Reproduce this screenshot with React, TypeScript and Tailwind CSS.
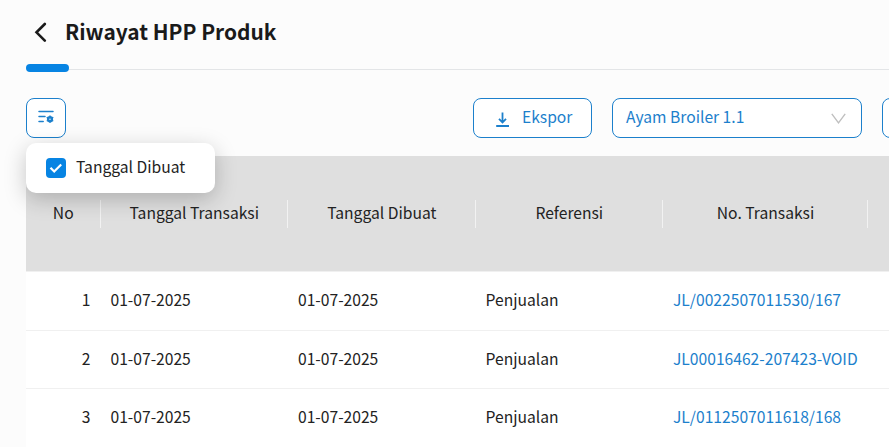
import { useState } from "react";

const COLUMNS = [
  { label: "No", cell: "w-[74.5px]" },
  { label: "Tanggal Transaksi", cell: "w-[187.5px]" },
  { label: "Tanggal Dibuat", cell: "w-[187.5px]" },
  { label: "Referensi", cell: "w-[187.5px]" },
  { label: "No. Transaksi", cell: "w-[205px]" },
];

const ROWS = [
  { date: "01-07-2025", created: "01-07-2025", ref: "Penjualan", trx: "JL/0022507011530/167" },
  { date: "01-07-2025", created: "01-07-2025", ref: "Penjualan", trx: "JL00016462-207423-VOID" },
  { date: "01-07-2025", created: "01-07-2025", ref: "Penjualan", trx: "JL/0112507011618/168" },
];

function ColumnSettingIcon() {
  return (
    <svg width="16" height="14" viewBox="0 0 16 14" fill="none" stroke="#1c80cc" strokeWidth="1.5" strokeLinecap="round">
      <path d="M1 1.5h14M1 6.5h6M1 11.6h4.2" />
      <circle cx="12" cy="9.2" r="1.9" strokeWidth="2.4" />
      <path
        d="M12 6.2v-.2M12 12.4v-.2M9.4 7.7l-.2-.1M14.8 10.8l-.2-.1M9.4 10.7l-.2.1M14.8 7.6l-.2.1"
        strokeWidth="1.4"
      />
    </svg>
  );
}

function DownloadIcon() {
  return (
    <svg width="14" height="16" viewBox="0 0 14 16" fill="none" stroke="#1c80cc" strokeWidth="1.8">
      <path d="M6.5.5v9.8M3 6.8l3.5 3.7L10 6.8" />
      <path d="M.2 14h12.8" strokeWidth="2" />
    </svg>
  );
}

export default function App() {
  const [showCreated, setShowCreated] = useState(true);

  return (
    <div className="h-[447px] w-full overflow-hidden bg-[#fcfcfc] pl-[26px] font-['Noto_Sans_CJK_SC','Noto_Sans',sans-serif] text-[15.65px] leading-6 text-[#222]">
      <header className="flex h-16 items-center">
        <button className="ml-2 mr-[17px]">
          <svg width="14" height="20" viewBox="0 0 14 20" fill="none" stroke="#1a1a1a" strokeWidth="2.6" strokeLinecap="round">
            <path d="M10.8 2 2.5 10.3l8.3 8.3" />
          </svg>
        </button>
        <h1 className="pb-0.5 text-[20.9px] font-bold leading-8 text-[#1a1a1a]">Riwayat HPP Produk</h1>
      </header>
      <div className="flex h-2 items-center">
        <div className="h-2 w-[43px] rounded-full bg-[#0784e3]" />
        <div className="mt-[3px] h-px flex-1 bg-[#e3e5e7]" />
      </div>

      <div className="mt-[26px] flex h-[58px] items-start text-[#1c80cc]">
        <div className="relative">
          <button className="flex h-10 w-10 items-center justify-center rounded-lg border border-[#1c80cc] bg-white pb-0.5">
            <ColumnSettingIcon />
          </button>
          <label className="absolute left-0 top-[45px] z-10 flex h-[50px] w-[189px] items-center rounded-[10px] bg-white pl-5 text-[#222] shadow-[0_6px_22px_rgba(0,0,0,0.22)]">
            <input
              type="checkbox"
              className="peer sr-only"
              checked={showCreated}
              onChange={(e) => setShowCreated(e.target.checked)}
            />
            <span className="mr-2.5 flex h-5 w-5 items-center justify-center rounded bg-[#0784e3]">
              {showCreated && (
                <svg width="14" height="12" viewBox="0 0 14 12" fill="none" stroke="white" strokeWidth="2.2">
                  <path d="m1.5 5.8 3.7 3.7 7-7" />
                </svg>
              )}
            </span>
            <span className="whitespace-nowrap pb-0.5">Tanggal Dibuat</span>
          </label>
        </div>
        <div className="ml-[407px] flex shrink-0 gap-5">
          <button className="flex h-10 w-[119px] items-center rounded-lg border border-[#1c80cc] bg-white pl-[22px]">
            <span className="mt-1">
              <DownloadIcon />
            </span>
            <span className="ml-3 pb-0.5">Ekspor</span>
          </button>
          <button className="flex h-10 w-[250px] items-center justify-between rounded-lg border border-[#1c80cc] bg-white pl-[13px] pr-[15px]">
            <span className="pb-0.5">Ayam Broiler 1.1</span>
            <svg width="15" height="11" viewBox="0 0 15 11" fill="none" stroke="#bfbfbf" strokeWidth="1.4">
              <path d="m.8.8 6.7 9 6.7-9" />
            </svg>
          </button>
          <button className="h-10 w-[119px] rounded-lg border border-[#1c80cc] bg-white" />
        </div>
      </div>

      <div className="w-[960px] bg-white">
        <div className="flex h-[116px] items-center border-b border-[#f0f0f0] bg-[#dfdfdf]">
          {COLUMNS.map((col) => (
            <div key={col.label} className={`flex h-7 shrink-0 items-center border-r border-[#f2f2f2] ${col.cell}`}>
              <span className="w-full pb-px pl-px text-center">{col.label}</span>
            </div>
          ))}
        </div>
        {ROWS.map((row, i) => (
          <div key={i} className="flex h-[58.5px] items-center border-b border-[#f0f0f0] pb-px">
            <div className="w-[74.5px] shrink-0 pr-2.5 text-right">{i + 1}</div>
            <div className="w-[187.5px] shrink-0 pl-2.5">{row.date}</div>
            <div className="w-[187.5px] shrink-0 pl-2.5">{row.created}</div>
            <div className="w-[187.5px] shrink-0 pl-2.5">{row.ref}</div>
            <a className="w-[205px] shrink-0 whitespace-nowrap pl-2.5 text-[#1c80cc]">{row.trx}</a>
          </div>
        ))}
      </div>
    </div>
  );
}
